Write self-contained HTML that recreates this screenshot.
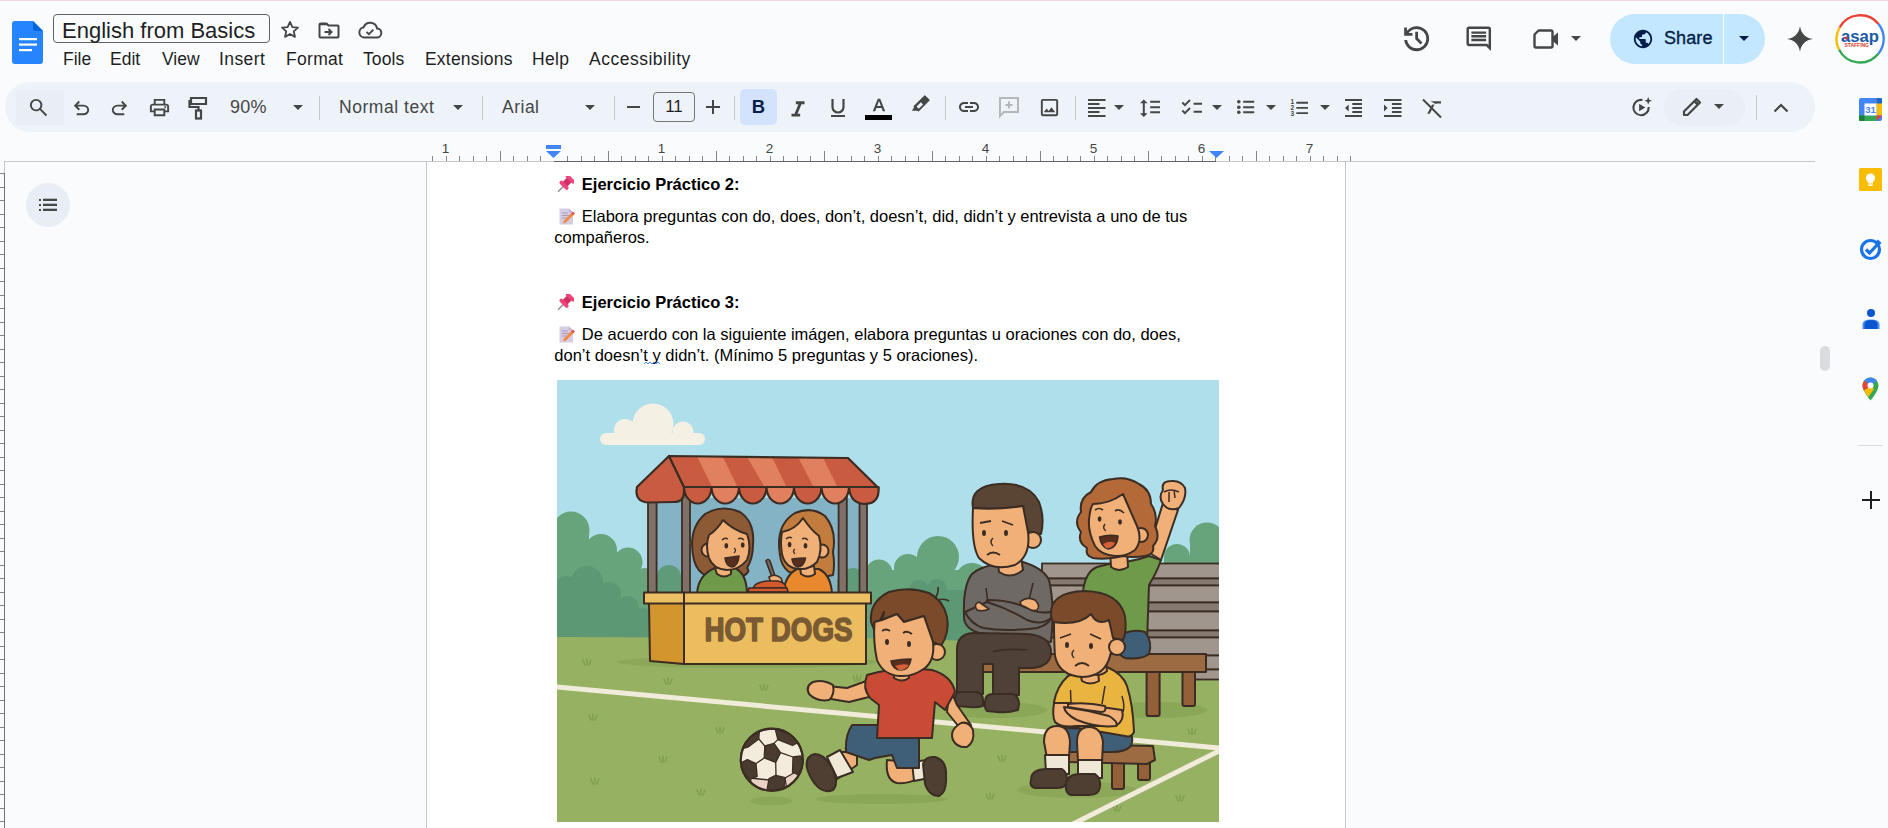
<!DOCTYPE html>
<html><head><meta charset="utf-8">
<style>
*{margin:0;padding:0;box-sizing:border-box}
html,body{width:1888px;height:828px;overflow:hidden;background:#f9fbfd;font-family:"Liberation Sans",sans-serif;position:relative}
.a{position:absolute}
.menu{position:absolute;top:48.5px;font-size:17.5px;color:#1f1f1f;white-space:nowrap}
.ico{position:absolute}
.sep{position:absolute;width:1px;background:#c7c7c7;top:96px;height:24px}
.tt{position:absolute;font-size:17.5px;color:#444746;white-space:nowrap}
.dd{position:absolute;width:0;height:0;border-left:5px solid transparent;border-right:5px solid transparent;border-top:5px solid #444746}
.doc{position:absolute;font-size:16.5px;color:#000;white-space:nowrap}
</style></head><body>
<div class="a" style="left:0;top:0;width:1888px;height:1px;background:#f2d8dc"></div>

<!-- ruler & page -->
<div class="a" style="left:426px;top:161px;width:920px;height:667px;background:#fff;border-left:1px solid #c7c7c7;border-right:1px solid #c7c7c7;border-top:1px solid #c7c7c7"></div>
<div class="a" style="left:4px;top:161px;width:1811px;height:1px;background:#c7c7c7"></div>
<div class="a" style="left:432.3px;top:156px;width:1px;height:5px;background:#80868b"></div><div class="a" style="left:445.8px;top:156px;width:1px;height:5px;background:#80868b"></div><div class="a" style="left:459.3px;top:156px;width:1px;height:5px;background:#80868b"></div><div class="a" style="left:472.8px;top:156px;width:1px;height:5px;background:#80868b"></div><div class="a" style="left:486.3px;top:156px;width:1px;height:5px;background:#80868b"></div><div class="a" style="left:499.8px;top:151px;width:1px;height:10px;background:#80868b"></div><div class="a" style="left:513.3px;top:156px;width:1px;height:5px;background:#80868b"></div><div class="a" style="left:526.8px;top:156px;width:1px;height:5px;background:#80868b"></div><div class="a" style="left:540.3px;top:156px;width:1px;height:5px;background:#80868b"></div><div class="a" style="left:567.3px;top:156px;width:1px;height:5px;background:#80868b"></div><div class="a" style="left:580.8px;top:156px;width:1px;height:5px;background:#80868b"></div><div class="a" style="left:594.3px;top:156px;width:1px;height:5px;background:#80868b"></div><div class="a" style="left:607.8px;top:151px;width:1px;height:10px;background:#80868b"></div><div class="a" style="left:621.3px;top:156px;width:1px;height:5px;background:#80868b"></div><div class="a" style="left:634.8px;top:156px;width:1px;height:5px;background:#80868b"></div><div class="a" style="left:648.3px;top:156px;width:1px;height:5px;background:#80868b"></div><div class="a" style="left:661.8px;top:156px;width:1px;height:5px;background:#80868b"></div><div class="a" style="left:675.3px;top:156px;width:1px;height:5px;background:#80868b"></div><div class="a" style="left:688.8px;top:156px;width:1px;height:5px;background:#80868b"></div><div class="a" style="left:702.3px;top:156px;width:1px;height:5px;background:#80868b"></div><div class="a" style="left:715.8px;top:151px;width:1px;height:10px;background:#80868b"></div><div class="a" style="left:729.3px;top:156px;width:1px;height:5px;background:#80868b"></div><div class="a" style="left:742.8px;top:156px;width:1px;height:5px;background:#80868b"></div><div class="a" style="left:756.3px;top:156px;width:1px;height:5px;background:#80868b"></div><div class="a" style="left:769.8px;top:156px;width:1px;height:5px;background:#80868b"></div><div class="a" style="left:783.3px;top:156px;width:1px;height:5px;background:#80868b"></div><div class="a" style="left:796.8px;top:156px;width:1px;height:5px;background:#80868b"></div><div class="a" style="left:810.3px;top:156px;width:1px;height:5px;background:#80868b"></div><div class="a" style="left:823.8px;top:151px;width:1px;height:10px;background:#80868b"></div><div class="a" style="left:837.3px;top:156px;width:1px;height:5px;background:#80868b"></div><div class="a" style="left:850.8px;top:156px;width:1px;height:5px;background:#80868b"></div><div class="a" style="left:864.3px;top:156px;width:1px;height:5px;background:#80868b"></div><div class="a" style="left:877.8px;top:156px;width:1px;height:5px;background:#80868b"></div><div class="a" style="left:891.3px;top:156px;width:1px;height:5px;background:#80868b"></div><div class="a" style="left:904.8px;top:156px;width:1px;height:5px;background:#80868b"></div><div class="a" style="left:918.3px;top:156px;width:1px;height:5px;background:#80868b"></div><div class="a" style="left:931.8px;top:151px;width:1px;height:10px;background:#80868b"></div><div class="a" style="left:945.3px;top:156px;width:1px;height:5px;background:#80868b"></div><div class="a" style="left:958.8px;top:156px;width:1px;height:5px;background:#80868b"></div><div class="a" style="left:972.3px;top:156px;width:1px;height:5px;background:#80868b"></div><div class="a" style="left:985.8px;top:156px;width:1px;height:5px;background:#80868b"></div><div class="a" style="left:999.3px;top:156px;width:1px;height:5px;background:#80868b"></div><div class="a" style="left:1012.8px;top:156px;width:1px;height:5px;background:#80868b"></div><div class="a" style="left:1026.3px;top:156px;width:1px;height:5px;background:#80868b"></div><div class="a" style="left:1039.8px;top:151px;width:1px;height:10px;background:#80868b"></div><div class="a" style="left:1053.3px;top:156px;width:1px;height:5px;background:#80868b"></div><div class="a" style="left:1066.8px;top:156px;width:1px;height:5px;background:#80868b"></div><div class="a" style="left:1080.3px;top:156px;width:1px;height:5px;background:#80868b"></div><div class="a" style="left:1093.8px;top:156px;width:1px;height:5px;background:#80868b"></div><div class="a" style="left:1107.3px;top:156px;width:1px;height:5px;background:#80868b"></div><div class="a" style="left:1120.8px;top:156px;width:1px;height:5px;background:#80868b"></div><div class="a" style="left:1134.3px;top:156px;width:1px;height:5px;background:#80868b"></div><div class="a" style="left:1147.8px;top:151px;width:1px;height:10px;background:#80868b"></div><div class="a" style="left:1161.3px;top:156px;width:1px;height:5px;background:#80868b"></div><div class="a" style="left:1174.8px;top:156px;width:1px;height:5px;background:#80868b"></div><div class="a" style="left:1188.3px;top:156px;width:1px;height:5px;background:#80868b"></div><div class="a" style="left:1201.8px;top:156px;width:1px;height:5px;background:#80868b"></div><div class="a" style="left:1215.3px;top:156px;width:1px;height:5px;background:#80868b"></div><div class="a" style="left:1228.8px;top:156px;width:1px;height:5px;background:#80868b"></div><div class="a" style="left:1242.3px;top:156px;width:1px;height:5px;background:#80868b"></div><div class="a" style="left:1255.8px;top:151px;width:1px;height:10px;background:#80868b"></div><div class="a" style="left:1269.3px;top:156px;width:1px;height:5px;background:#80868b"></div><div class="a" style="left:1282.8px;top:156px;width:1px;height:5px;background:#80868b"></div><div class="a" style="left:1296.3px;top:156px;width:1px;height:5px;background:#80868b"></div><div class="a" style="left:1309.8px;top:156px;width:1px;height:5px;background:#80868b"></div><div class="a" style="left:1323.3px;top:156px;width:1px;height:5px;background:#80868b"></div><div class="a" style="left:1336.8px;top:156px;width:1px;height:5px;background:#80868b"></div><div class="a" style="left:1350.3px;top:156px;width:1px;height:5px;background:#80868b"></div>
<div class="a" style="left:554px;top:160.5px;width:662px;height:1.5px;background:#5f6368"></div>
<div class="a" style="left:435.5px;top:141px;width:20px;text-align:center;font-size:13.5px;color:#444746">1</div><div class="a" style="left:651.5px;top:141px;width:20px;text-align:center;font-size:13.5px;color:#444746">1</div><div class="a" style="left:759.5px;top:141px;width:20px;text-align:center;font-size:13.5px;color:#444746">2</div><div class="a" style="left:867.5px;top:141px;width:20px;text-align:center;font-size:13.5px;color:#444746">3</div><div class="a" style="left:975.5px;top:141px;width:20px;text-align:center;font-size:13.5px;color:#444746">4</div><div class="a" style="left:1083.5px;top:141px;width:20px;text-align:center;font-size:13.5px;color:#444746">5</div><div class="a" style="left:1191.5px;top:141px;width:20px;text-align:center;font-size:13.5px;color:#444746">6</div><div class="a" style="left:1299.5px;top:141px;width:20px;text-align:center;font-size:13.5px;color:#444746">7</div>
<div class="a" style="left:546px;top:145px;width:15px;height:4px;background:#4285f4"></div>
<svg class="ico" style="left:546px;top:151px" width="15" height="7" viewBox="0 0 15 7"><path d="M0 0h15L7.5 7z" fill="#4285f4"/></svg>
<svg class="ico" style="left:1208.5px;top:151px" width="15" height="7" viewBox="0 0 15 7"><path d="M0 0h15L7.5 7z" fill="#4285f4"/></svg>
<div class="a" style="left:4px;top:161px;width:1px;height:12px;background:#c7c7c7"></div>
<div class="a" style="left:4px;top:173px;width:1px;height:655px;background:#70757a"></div>
<div class="a" style="left:0;top:173.2px;width:4px;height:1px;background:#80868b"></div><div class="a" style="left:0;top:186.7px;width:4px;height:1px;background:#80868b"></div><div class="a" style="left:0;top:200.2px;width:4px;height:1px;background:#80868b"></div><div class="a" style="left:0;top:213.7px;width:4px;height:1px;background:#80868b"></div><div class="a" style="left:0;top:227.2px;width:4px;height:1px;background:#80868b"></div><div class="a" style="left:0;top:240.7px;width:4px;height:1px;background:#80868b"></div><div class="a" style="left:0;top:254.2px;width:4px;height:1px;background:#80868b"></div><div class="a" style="left:0;top:267.7px;width:4px;height:1px;background:#80868b"></div><div class="a" style="left:0;top:281.2px;width:4px;height:1px;background:#80868b"></div><div class="a" style="left:0;top:294.7px;width:4px;height:1px;background:#80868b"></div><div class="a" style="left:0;top:308.2px;width:4px;height:1px;background:#80868b"></div><div class="a" style="left:0;top:321.7px;width:4px;height:1px;background:#80868b"></div><div class="a" style="left:0;top:335.2px;width:4px;height:1px;background:#80868b"></div><div class="a" style="left:0;top:348.7px;width:4px;height:1px;background:#80868b"></div><div class="a" style="left:0;top:362.2px;width:4px;height:1px;background:#80868b"></div><div class="a" style="left:0;top:375.7px;width:4px;height:1px;background:#80868b"></div><div class="a" style="left:0;top:389.2px;width:4px;height:1px;background:#80868b"></div><div class="a" style="left:0;top:402.7px;width:4px;height:1px;background:#80868b"></div><div class="a" style="left:0;top:416.2px;width:4px;height:1px;background:#80868b"></div><div class="a" style="left:0;top:429.7px;width:4px;height:1px;background:#80868b"></div><div class="a" style="left:0;top:443.2px;width:4px;height:1px;background:#80868b"></div><div class="a" style="left:0;top:456.7px;width:4px;height:1px;background:#80868b"></div><div class="a" style="left:0;top:470.2px;width:4px;height:1px;background:#80868b"></div><div class="a" style="left:0;top:483.7px;width:4px;height:1px;background:#80868b"></div><div class="a" style="left:0;top:497.2px;width:4px;height:1px;background:#80868b"></div><div class="a" style="left:0;top:510.7px;width:4px;height:1px;background:#80868b"></div><div class="a" style="left:0;top:524.2px;width:4px;height:1px;background:#80868b"></div><div class="a" style="left:0;top:537.7px;width:4px;height:1px;background:#80868b"></div><div class="a" style="left:0;top:551.2px;width:4px;height:1px;background:#80868b"></div><div class="a" style="left:0;top:564.7px;width:4px;height:1px;background:#80868b"></div><div class="a" style="left:0;top:578.2px;width:4px;height:1px;background:#80868b"></div><div class="a" style="left:0;top:591.7px;width:4px;height:1px;background:#80868b"></div><div class="a" style="left:0;top:605.2px;width:4px;height:1px;background:#80868b"></div><div class="a" style="left:0;top:618.7px;width:4px;height:1px;background:#80868b"></div><div class="a" style="left:0;top:632.2px;width:4px;height:1px;background:#80868b"></div><div class="a" style="left:0;top:645.7px;width:4px;height:1px;background:#80868b"></div><div class="a" style="left:0;top:659.2px;width:4px;height:1px;background:#80868b"></div><div class="a" style="left:0;top:672.7px;width:4px;height:1px;background:#80868b"></div><div class="a" style="left:0;top:686.2px;width:4px;height:1px;background:#80868b"></div><div class="a" style="left:0;top:699.7px;width:4px;height:1px;background:#80868b"></div><div class="a" style="left:0;top:713.2px;width:4px;height:1px;background:#80868b"></div><div class="a" style="left:0;top:726.7px;width:4px;height:1px;background:#80868b"></div><div class="a" style="left:0;top:740.2px;width:4px;height:1px;background:#80868b"></div><div class="a" style="left:0;top:753.7px;width:4px;height:1px;background:#80868b"></div><div class="a" style="left:0;top:767.2px;width:4px;height:1px;background:#80868b"></div><div class="a" style="left:0;top:780.7px;width:4px;height:1px;background:#80868b"></div><div class="a" style="left:0;top:794.2px;width:4px;height:1px;background:#80868b"></div><div class="a" style="left:0;top:807.7px;width:4px;height:1px;background:#80868b"></div><div class="a" style="left:0;top:821.2px;width:4px;height:1px;background:#80868b"></div>
<div class="a" style="left:26px;top:183px;width:44px;height:44px;border-radius:22px;background:#e8edf6"></div>
<svg class="ico" style="left:38px;top:197px" width="20" height="16" viewBox="0 0 20 16"><rect x="1" y="2" width="2" height="2" fill="#444746"/><rect x="1" y="7" width="2" height="2" fill="#444746"/><rect x="1" y="12" width="2" height="2" fill="#444746"/><rect x="5" y="1.7" width="14" height="2.3" fill="#444746"/><rect x="5" y="6.7" width="14" height="2.3" fill="#444746"/><rect x="5" y="11.7" width="14" height="2.3" fill="#444746"/></svg>
<div class="a" style="left:1820px;top:346px;width:10px;height:25px;border-radius:5px;background:#dadce0"></div>
<!-- side panel -->
<svg class="ico" style="left:1859px;top:98px" width="23" height="23" viewBox="0 0 23 23"><rect x="0" y="0" width="23" height="23" rx="2" fill="#4285f4"/><rect x="17.5" y="0" width="5.5" height="17.5" fill="#fbbc04"/><rect x="0" y="17.5" width="17.5" height="5.5" fill="#34a853"/><path d="M17.5 17.5h5.5l-5.5 5.5z" fill="#ea4335"/><path d="M17.5 0h3.5q2.5 0 2.5 2.5V5.5h-6z" fill="#1967d2"/><path d="M0 17.5h5.5v5.5H2.5Q0 23 0 20.5z" fill="#188038"/><rect x="5.5" y="5.5" width="12" height="12" fill="#fff"/><text x="11.5" y="15.3" text-anchor="middle" font-family="Liberation Sans" font-size="9.5" font-weight="700" fill="#4285f4">31</text></svg>
<svg class="ico" style="left:1859px;top:168px" width="23" height="23" viewBox="0 0 23 23"><rect width="23" height="23" rx="1.5" fill="#fbbc04"/><circle cx="11.5" cy="10" r="4.6" fill="#fff"/><rect x="9" y="13" width="5" height="2.5" fill="#fff"/><rect x="9.3" y="16.3" width="4.4" height="1.6" fill="#fff"/></svg>
<svg class="ico" style="left:1859px;top:237px" width="24" height="24" viewBox="0 0 24 24"><circle cx="11.5" cy="12.5" r="9" fill="none" stroke="#1a73e8" stroke-width="3.2"/><path d="M7 12.5l3.5 3.5 8-8.5" fill="none" stroke="#1a73e8" stroke-width="3.2"/><path d="M19 2.5l3.5 3.5-3 3-3.5-3.5z" fill="#1a73e8"/></svg>
<svg class="ico" style="left:1860px;top:308px" width="22" height="22" viewBox="0 0 22 22"><circle cx="11" cy="5" r="4" fill="#0b57d0"/><path d="M2.5 21v-4.5Q2.5 11.5 11 11.5t8.5 5V21z" fill="#4c8df6"/><path d="M4.5 21v-4.5Q4.5 12 11 12t6.5 4.5V21z" fill="#0b57d0"/></svg>
<svg class="ico" style="left:1862px;top:377px" width="17" height="24" viewBox="0 0 17 24"><path d="M8.5 0.5A8 8 0 0 0 0.5 8.5c0 5.5 8 15 8 15s8-9.5 8-15A8 8 0 0 0 8.5 0.5z" fill="#34a853"/><path d="M8.5 0.5A8 8 0 0 0 2.3 3.4L8.5 9.5l6.2-6.1A8 8 0 0 0 8.5 0.5z" fill="#4285f4"/><path d="M2.3 3.4A8 8 0 0 0 0.5 8.5c0 1.5.6 3.2 1.5 4.9L8.5 9.5z" fill="#ea4335"/><path d="M2 13.4c1.2 2.4 3 4.8 4.3 6.5L12 12 8.5 9.5z" fill="#fbbc04"/><circle cx="8.5" cy="8.5" r="3" fill="#fff"/></svg>
<div class="a" style="left:1858px;top:445px;width:25px;height:1px;background:#dadce0"></div>
<div class="a" style="left:1862px;top:499px;width:18px;height:2px;background:#1f1f1f"></div>
<div class="a" style="left:1870px;top:491px;width:2px;height:18px;background:#1f1f1f"></div>
<!-- doc text -->
<svg class="ico" style="left:557px;top:176px" width="17" height="16" viewBox="0 0 17 16"><path d="M1.5 15.2l6-6" stroke="#8a8f99" stroke-width="1.4" stroke-linecap="round"/><g transform="rotate(45 10 6.3)"><rect x="6.7" y="1.5" width="6.6" height="9" fill="#cf2f62"/><rect x="4.3" y="-0.3" width="11.4" height="3.8" rx="1.9" fill="#f0447c"/><rect x="4.3" y="8.6" width="11.4" height="3.8" rx="1.9" fill="#f0447c"/></g></svg>
<div class="doc" style="left:581.8px;top:174.6px;font-weight:700">Ejercicio Práctico 2:</div>
<svg class="ico" style="left:559px;top:208px" width="16" height="17" viewBox="0 0 16 17"><path d="M0.5 0.5h9.5l4 4v12h-13.5z" fill="#d6cce3"/><path d="M10 0.5l4 4h-4z" fill="#bfb3d0"/><path d="M3 5h6M3 7.5h8M3 10h6" stroke="#a89bb8" stroke-width="1"/><path d="M4 15.5l1-3 8-8 2 2-8 8z" fill="#f28b3c"/><path d="M12 5.5l2-2 2 2-2 2z" fill="#e8554e"/></svg>
<div class="doc" style="left:581.8px;top:207px">Elabora preguntas con do, does, don’t, doesn’t, did, didn’t y entrevista a uno de tus</div>
<div class="doc" style="left:554.3px;top:228px">compañeros.</div>
<svg class="ico" style="left:557px;top:294px" width="17" height="16" viewBox="0 0 17 16"><path d="M1.5 15.2l6-6" stroke="#8a8f99" stroke-width="1.4" stroke-linecap="round"/><g transform="rotate(45 10 6.3)"><rect x="6.7" y="1.5" width="6.6" height="9" fill="#cf2f62"/><rect x="4.3" y="-0.3" width="11.4" height="3.8" rx="1.9" fill="#f0447c"/><rect x="4.3" y="8.6" width="11.4" height="3.8" rx="1.9" fill="#f0447c"/></g></svg>
<div class="doc" style="left:581.8px;top:293px;font-weight:700">Ejercicio Práctico 3:</div>
<svg class="ico" style="left:559px;top:326px" width="16" height="17" viewBox="0 0 16 17"><path d="M0.5 0.5h9.5l4 4v12h-13.5z" fill="#d6cce3"/><path d="M10 0.5l4 4h-4z" fill="#bfb3d0"/><path d="M3 5h6M3 7.5h8M3 10h6" stroke="#a89bb8" stroke-width="1"/><path d="M4 15.5l1-3 8-8 2 2-8 8z" fill="#f28b3c"/><path d="M12 5.5l2-2 2 2-2 2z" fill="#e8554e"/></svg>
<div class="doc" style="left:581.8px;top:325px">De acuerdo con la siguiente imágen, elabora preguntas u oraciones con do, does,</div>
<div class="doc" style="left:554.3px;top:345.5px">don’t doesn’t y didn’t. (Mínimo 5 preguntas y 5 oraciones).</div>
<svg class="ico" style="left:644px;top:361px" width="16" height="4" viewBox="0 0 16 4"><path d="M0 3l2-2 2 2 2-2 2 2 2-2 2 2 2-2 2 2" fill="none" stroke="#4285f4" stroke-width="1"/></svg>
<!-- IMAGE -->
<svg class="ico" id="img" style="left:557px;top:380px" width="662" height="442" viewBox="0 0 662 442">
<rect width="662" height="442" fill="#b0dfec"/>
<!-- cloud -->
<g fill="#f5f0e4">
<circle cx="96" cy="44" r="20.5"/><circle cx="68" cy="50" r="11"/><circle cx="126" cy="52" r="10.5"/>
<rect x="43" y="53" width="105" height="12" rx="6"/>
</g>
<!-- back trees -->
<g fill="#67a47b">
<circle cx="14" cy="150" r="18.5"/><circle cx="44" cy="170" r="16"/><circle cx="71" cy="182" r="14.5"/><circle cx="88" cy="200" r="12"/>
<rect x="0" y="150" width="32" height="110"/><rect x="30" y="170" width="30" height="90"/><rect x="58" y="182" width="24" height="80"/><rect x="80" y="200" width="20" height="62"/>
<circle cx="322" cy="193" r="13.5"/><circle cx="351" cy="188" r="14"/><circle cx="381" cy="177" r="21"/><circle cx="415" cy="200" r="17"/>
<rect x="300" y="190" width="130" height="72"/><rect x="308" y="193" width="110" height="70"/>
<circle cx="296" cy="205" r="14"/><circle cx="112" cy="197" r="13"/>
<circle cx="620" cy="177" r="13"/><circle cx="650" cy="160" r="17.5"/><rect x="607" y="177" width="55" height="20"/><rect x="633" y="160" width="29" height="20"/>
</g>
<g fill="#5b9873">
<circle cx="9" cy="208" r="12"/><circle cx="30" cy="202" r="16"/><circle cx="52" cy="214" r="12"/><circle cx="70" cy="228" r="12"/><circle cx="86" cy="238" r="10"/>
<rect x="0" y="208" width="40" height="52"/><rect x="40" y="214" width="22" height="46"/><rect x="58" y="228" width="22" height="32"/><rect x="76" y="238" width="20" height="22"/>
<circle cx="362" cy="210" r="10"/><circle cx="380" cy="209" r="10"/><circle cx="404" cy="222" r="12"/><rect x="352" y="210" width="70" height="52"/><rect x="340" y="225" width="82" height="37"/>
</g>
<!-- grass -->
<path d="M0 257L300 258L420 261L662 263V442H0z" fill="#97b162"/>
<g fill="#89a656" opacity="0.9">
<ellipse cx="190" cy="282" rx="130" ry="6"/>
<ellipse cx="325" cy="419" rx="66" ry="5"/>
<ellipse cx="214" cy="421" rx="21" ry="4.5"/>
<ellipse cx="440" cy="330" rx="50" ry="8"/>
<ellipse cx="600" cy="330" rx="50" ry="8"/>
<ellipse cx="520" cy="410" rx="60" ry="8"/>
</g>
<g stroke="#809f52" stroke-width="1.6" stroke-linecap="round" fill="none"><path d="M26 280L28 285M30 279L30 285M34 280L32 285"/><path d="M107 299L109 304M111 298L111 304M115 299L113 304"/><path d="M203 305L205 310M207 304L207 310M211 305L209 310"/><path d="M32 335L34 340M36 334L36 340M40 335L38 340"/><path d="M159 348L161 353M163 347L163 353M167 348L165 353"/><path d="M102 377L104 382M106 376L106 382M110 377L108 382"/><path d="M34 399L36 404M38 398L38 404M42 399L40 404"/><path d="M140 410L142 415M144 409L144 415M148 410L146 415"/><path d="M631 349L633 354M635 348L635 354M639 349L637 354"/><path d="M441 376L443 381M445 375L445 381M449 376L447 381"/><path d="M619 416L621 421M623 415L623 421M627 416L625 421"/><path d="M429 414L431 419M433 413L433 419M437 414L435 419"/><path d="M296 296L298 301M300 295L300 301M304 296L302 301"/><path d="M556 426L558 431M560 425L560 431M564 426L562 431"/></g>
<!-- field lines -->
<path d="M0 307L662 368" stroke="#f1ebd9" stroke-width="5"/>
<path d="M664 370L516 444" stroke="#f1ebd9" stroke-width="5"/>
<!-- booth interior -->
<rect x="95" y="118" width="212" height="96" fill="#84b3c5"/>
<g fill="#5f9a79"><circle cx="112" cy="197" r="12"/><rect x="95" y="197" width="35" height="18"/><circle cx="296" cy="200" r="12"/><rect x="280" y="200" width="27" height="15"/></g>
<!-- posts -->
<g fill="#7f7169" stroke="#3b2d23" stroke-width="1.8">
<rect x="91" y="115" width="8.6" height="100"/><rect x="125" y="115" width="8" height="100"/>
<rect x="281.6" y="115" width="8.2" height="100"/><rect x="302.5" y="115" width="7.5" height="100"/>
</g>
<!-- girl 1 -->
<g stroke="#3b2d23" stroke-width="2" stroke-linejoin="round">
<path d="M137 180Q130 150 148 134Q165 124 183 132Q198 142 196 165Q196 178 190 188Q194 192 186 196L150 196Q140 192 137 180z" fill="#8d5a36"/>
<path d="M140 214Q141 195 158 188L178 188Q190 194 190 214z" fill="#6e9a4a"/>
<path d="M158 188L160 194Q167 199 174 194L174 186z" fill="#f0b078"/>
<circle cx="151" cy="170" r="6.5" fill="#f0b078"/>
<path d="M152 155Q160 150 166 140Q176 150 190 154Q195 168 190 180Q182 190 170 190Q156 189 152 178Q148 166 152 155z" fill="#f0b078"/>
<path d="M168 178Q176 177 182 176Q181 186 175 187Q169 186 168 178z" fill="#5a2e1e" stroke-width="1.6"/>
<path d="M165 160Q168 157 171 159M181 159Q184 157 187 160" fill="none" stroke-width="1.4"/>
<path d="M177 168Q180 170 177 173" fill="none" stroke-width="1.3"/>
</g>
<g fill="#3b2d23"><ellipse cx="169.3" cy="165.7" rx="1.9" ry="2.7"/><ellipse cx="185.7" cy="165" rx="1.9" ry="2.7"/></g>
<!-- girl 2 -->
<g stroke="#3b2d23" stroke-width="2" stroke-linejoin="round">
<path d="M223 175Q218 145 238 133Q255 126 268 136Q280 150 276 172Q278 185 276 195L262 198L232 192Q224 186 223 175z" fill="#c27c3d"/>
<path d="M226 214Q228 195 240 189L262 189Q274 195 275 214z" fill="#e8892e"/>
<path d="M243 188L244 194Q251 199 258 194L257 186z" fill="#f0b078"/>
<circle cx="265" cy="171" r="6.5" fill="#f0b078"/>
<path d="M225 152Q238 150 246 138Q254 150 262 156Q266 170 260 182Q252 190 242 189Q228 188 225 174Q223 162 225 152z" fill="#f0b078"/>
<path d="M235 179Q242 178 248.5 178Q247 186 241 187Q236 186 235 179z" fill="#5a2e1e" stroke-width="1.6"/>
<path d="M229 159Q232 156 235 158M245 159Q248 157 251 160" fill="none" stroke-width="1.4"/>
<path d="M238 169Q235 171 238 174" fill="none" stroke-width="1.3"/>
</g>
<g fill="#3b2d23"><ellipse cx="232.6" cy="164.5" rx="1.9" ry="2.7"/><ellipse cx="248.5" cy="165.7" rx="1.9" ry="2.7"/></g>
<!-- dish -->
<g stroke="#3b2d23" stroke-width="1.6" stroke-linejoin="round">
<path d="M209 181Q211 178 213 181L219 199L216 200z" fill="#7a6a60"/>
<path d="M212 197Q218 193 224 198L226 204L214 204z" fill="#f0b078"/>
<path d="M196 208Q198 202 211 201L221 201Q229 203 229 208z" fill="#d45a2e"/>
<path d="M191 212L231 212L230 208L192 208z" fill="#d45a2e"/>
</g>
<!-- counter -->
<g stroke="#3b2d23" stroke-width="2" stroke-linejoin="round">
<path d="M92 223L127 223L127 284L93 281z" fill="#d3962f"/>
<rect x="127" y="223" width="182" height="61" fill="#ebbd5f"/>
<rect x="87" y="212.5" width="227" height="11" fill="#ecc062"/>
<path d="M127 212.5V223.5" />
</g>
<text x="147.5" y="260.5" font-family="Liberation Sans" font-weight="700" font-size="34" fill="#7a5a32" stroke="#7a5a32" stroke-width="1.6" stroke-linejoin="round" textLength="148" lengthAdjust="spacingAndGlyphs">HOT DOGS</text>
<!-- awning -->
<g stroke="#3b2d23" stroke-width="2.2" stroke-linejoin="round">
<path d="M112 76L80 107Q77 122 92 122.5L117 122Q127 122 127 112L127 107z" fill="#c95b40"/>
</g>
<clipPath id="aw"><path d="M112 76L291 78L321.5 108L127 107z"/></clipPath>
<g clip-path="url(#aw)">
<rect x="80" y="70" width="250" height="45" fill="#c95b40"/>
<g fill="#e0805f"><path d="M139.5 75L165 75L181 108L155.5 108z"/><path d="M189 75L214 75L230 108L208 108z"/><path d="M240 75L264.5 75L281 108L257 108z"/></g>
</g>
<g stroke="#3b2d23" stroke-width="2.2" fill="none" stroke-linejoin="round"><path d="M112 76L291 78L321.5 108L127 107zM112 76L127 107"/></g>
<g stroke="#3b2d23" stroke-width="2.2" stroke-linejoin="round">
<path d="M127 107H154.5A13.75 16.5 0 0 1 127 107" fill="#c95b40"/>
<path d="M154.5 107H182A13.75 16.5 0 0 1 154.5 107" fill="#e0805f"/>
<path d="M182 107H209.5A13.75 16.5 0 0 1 182 107" fill="#c95b40"/>
<path d="M209.5 107H237A13.75 16.5 0 0 1 209.5 107" fill="#e0805f"/>
<path d="M237 107H264.5A13.75 16.5 0 0 1 237 107" fill="#c95b40"/>
<path d="M264.5 107H292A13.75 16.5 0 0 1 264.5 107" fill="#e0805f"/>
<path d="M292 107H321.5Q323 124 307 124Q293 123 292 107z" fill="#c95b40"/>
</g>
<!-- bench back -->
<g stroke="#3b2d23" stroke-width="1.8">
<rect x="485" y="183.5" width="180" height="15" fill="#a0968d"/>
<rect x="485" y="198.5" width="180" height="7" fill="#857a71"/>
<rect x="485" y="205.5" width="180" height="17" fill="#a0968d"/>
<rect x="485" y="222.5" width="180" height="9" fill="#857a71"/>
<rect x="485" y="231.5" width="180" height="19" fill="#a0968d"/>
<rect x="485" y="250.5" width="180" height="7" fill="#857a71"/>
<rect x="485" y="257.5" width="180" height="18" fill="#a0968d"/>
<rect x="485" y="275.5" width="180" height="14" fill="#a0968d"/>
<rect x="636" y="289.5" width="30" height="10" fill="#a0968d"/>
</g>
<!-- bench seat -->
<g stroke="#3b2d23" stroke-width="2" stroke-linejoin="round">
<rect x="589.6" y="288" width="13" height="48" rx="2" fill="#93603a"/>
<rect x="625.5" y="288" width="12.5" height="38" rx="2" fill="#93603a"/>
<path d="M425 274H649V292H425z" fill="#9c6b42"/>
</g>
<!-- woman -->
<g stroke="#3b2d23" stroke-width="2" stroke-linejoin="round">
<path d="M526 262L526 212Q528 192 540 187L556 183Q575 182 592 176L604 180Q600 192 592 205L590 262z" fill="#6e9a4a"/>
<path d="M591 172L606 123L621 130L604 180z" fill="#f0b078"/>
<path d="M606 110Q604 101 614 101Q624 100 628 108Q630 118 622 128Q612 132 606 124Q601 117 606 110z" fill="#f0b078"/>
<path d="M607 112Q614 108 622 112M612 112L612 122M617 110L618 118" fill="none" stroke-width="1.5"/>
<path d="M553 170L554 187Q562 193 571 187L570 170z" fill="#f0b078"/>
<path d="M560 258Q572 248 588 252Q596 262 592 274Q584 280 568 278Q556 272 560 258z" fill="#3f5e78"/>
<path d="M536 178Q528 176 530 168Q520 162 524 152Q516 142 524 132Q522 118 534 112Q540 100 556 99Q570 96 582 104Q594 110 594 124Q601 134 598 146Q604 158 596 166Q598 174 588 176Q576 178 566 176Q548 180 536 178z" fill="#b36a38"/>
<circle cx="584" cy="155" r="7" fill="#f0b078"/>
<path d="M532 140Q533 128 536 124Q552 124 566 114Q572 128 580 146Q586 160 578 170Q568 177 558 176Q544 175 538 166Q531 152 532 140z" fill="#f0b078"/>
<path d="M542.6 157Q552 154 561 156Q560 168 551 169Q544 167 542.6 157z" fill="#5a2e1e" stroke-width="1.6"/>
<path d="M546 164Q553 160 558 163Q555 169 549 168z" fill="#d4603a" stroke="none"/>
<path d="M538 130Q542 127 546 130M558 131Q562 128 567 133" fill="none" stroke-width="1.6"/>
<path d="M548 144Q545 148 549 151" fill="none" stroke-width="1.4"/>
</g>
<g fill="#3b2d23"><ellipse cx="542.6" cy="139" rx="1.9" ry="2.7"/><ellipse cx="563" cy="142" rx="1.9" ry="2.7"/></g>
<!-- man -->
<g stroke="#3b2d23" stroke-width="2" stroke-linejoin="round">
<path d="M422 253Q406 248 407 235Q406 205 415 194Q424 186 442 184L466 182Q486 188 492 200Q498 225 494 262z" fill="#6f6965"/>
<path d="M440 176L442 192Q454 200 466 190L464 176z" fill="#f0b078"/>
<path d="M429 208L431 223M476 203L472 220" fill="none" stroke-width="1.6"/>
<path d="M463 222Q470 216 478 220Q484 226 480 230Q472 232 466 229z" fill="#f0b078" stroke-width="1.6"/>
<path d="M408 232Q414 244 426 248Q450 252 480 248Q494 244 494 236Q470 238 452 226Q440 222 430 222z" fill="#6f6965"/>
<path d="M422 222Q416 224 420 230Q426 232 432 229z" fill="#f0b078" stroke-width="1.6"/>
<path d="M430 222Q450 228 470 240Q484 246 494 238L494 232Q480 234 470 228Q454 220 430 220z" fill="#6f6965"/>
<path d="M400 314L400 270Q400 254 416 253L470 254Q494 256 494 272Q494 286 476 288L462 288L462 315L436 315L436 284L426 284L426 314z" fill="#4f4038"/>
<path d="M436 272Q446 268 470 270" fill="none" stroke-width="1.6"/>
<path d="M398 318Q398 312 404 312L420 312Q426 314 426 320L426 326Q420 328 412 327L400 326Q397 324 398 318z" fill="#4f4038"/>
<path d="M428 322Q428 314 436 314L456 314Q462 316 462 324L461 330Q452 333 440 332L430 331Q427 328 428 322z" fill="#4f4038"/>
<path d="M416 128Q412 106 442 104Q472 102 482 122Q488 138 484 154L471 152L466 126Q440 130 416 128z" fill="#5a4535"/>
<circle cx="476" cy="160" r="8" fill="#f0b078"/>
<path d="M416 128Q440 130 466 126L471 152Q474 176 458 185Q436 192 422 178Q414 166 416 128z" fill="#f0b078"/>
<path d="M430 175Q436 170 443 175" fill="none" stroke-width="1.8"/>
<path d="M423 143L434 141M445 141L456 145" fill="none" stroke-width="1.8"/>
<path d="M436 158Q432 162 436 166" fill="none" stroke-width="1.4"/>
</g>
<g fill="#3b2d23"><ellipse cx="427" cy="153" rx="2" ry="3"/><ellipse cx="449" cy="153" rx="2" ry="3"/></g>
<!-- running boy -->
<g stroke="#3b2d23" stroke-width="2" stroke-linejoin="round">
<path d="M300 372L283 372L262 392L276 402L300 385z" fill="#f0b078"/>
<path d="M270 377L283 370L296 392L280 398z" fill="#efe8d6"/>
<path d="M250 388Q248 376 258 374Q268 374 276 390Q282 404 276 410Q266 414 258 404Q252 396 250 388z" fill="#4f3f33"/>
<path d="M330 380Q328 400 340 403Q352 404 362 398L362 383z" fill="#f0b078"/>
<path d="M355 382L370 380L372 398L357 401z" fill="#efe8d6"/>
<path d="M366 384Q368 376 378 377Q390 380 389 396Q390 412 382 416Q372 416 368 404z" fill="#4f3f33"/>
<path d="M295 345L362 345L362 388L340 388L335 375L318 378L312 380L289 372Q288 355 295 345z" fill="#3f5e78"/>
<path d="M393 308L400 325L414 345L406 352L390 332z" fill="#f0b078"/>
<path d="M404 343Q412 341 416 350Q418 362 410 367Q400 368 396 360Q392 350 404 343z" fill="#f0b078"/>
<path d="M312 300L290 308L270 306L268 318L292 322L316 316z" fill="#f0b078"/>
<path d="M256 302Q266 299 276 305Q278 315 272 320Q260 322 252 314Q248 306 256 302z" fill="#f0b078"/>
<path d="M310 295Q340 286 375 290Q395 296 398 312L388 330L378 322L375 358L320 358L322 325L313 318Q305 308 310 295z" fill="#c94a35"/>
<path d="M337 291L337 298Q345 303 352 298L352 291z" fill="#f0b078"/>
<path d="M314 242Q312 222 332 212Q352 206 372 213Q386 220 390 237Q393 252 384 266L376 262L367 236L347 242L340 234L325 240L327 232L318 252z" fill="#7a4a2a"/>
<path d="M378 219Q382 212 381 207M381 220Q388 218 392 221" fill="none" stroke-width="1.6"/>
<circle cx="380" cy="272" r="8" fill="#f0b078"/>
<path d="M317.5 242L325 240L327 232L325 240L340 234L347 242L367 236L376 262Q378 280 368 288Q356 297 343 296Q326 295 320 280Q316 262 317.5 242z" fill="#f0b078"/>
<path d="M334 281Q344 279 354 279Q352 290 344 290Q336 290 334 281z" fill="#5a2e1e" stroke-width="1.6"/>
<path d="M338 286Q346 283 352 285Q348 291 342 290z" fill="#d4603a" stroke="none"/>
<path d="M325 251Q329 248 333 251M346 253Q350 250 355 254" fill="none" stroke-width="1.8"/>
</g>
<g fill="#3b2d23"><ellipse cx="330" cy="262" rx="2" ry="3"/><ellipse cx="352" cy="264" rx="2" ry="3"/></g>
<!-- ball -->
<circle cx="214.8" cy="379.7" r="31" fill="#f3ebdc" stroke="#3b2d23" stroke-width="2"/>
<clipPath id="bc"><circle cx="214.8" cy="379.7" r="30.5"/></clipPath>
<g clip-path="url(#bc)" stroke="#3b2d23" stroke-width="1.3" stroke-linejoin="round">
<path d="M193 398L212 400L212 412L196 410z" fill="#e8d3c6"/>
<path d="M228 398L242 390L246 400L230 410z" fill="#e8d3c6"/>
<g fill="#4a3b30">
<path d="M207.8 366L217 363.4L223.5 372.6L218.7 382.4L207.2 378z"/>
<path d="M221.9 350.9L233.9 354.1L242.6 361.7L235.5 365.5L220.8 359.6L218 348z"/>
<path d="M202.3 352L201.8 359L190.9 367.2L184 369L186 356L196 348z"/>
<path d="M185 382.4L190.4 379.7L199 383.5L200.2 396.5L193.6 399.2L183 392z"/>
<path d="M212 398.7L218.7 395.4L228.4 397.6L227.3 406.3L219.7 412L210 410z"/>
<path d="M236 377L243.7 375.9L247 385.7L240.4 394.3L235.5 392.2z"/>
</g>
<path d="M207.8 366L201.8 359M217 363.4L220.8 359.6M223.5 372.6L236 377M218.7 382.4L219 395.4M207.2 378L199 383.5M233.9 354.1L232 352" fill="none"/>
</g>
<circle cx="214.8" cy="379.7" r="31" fill="none" stroke="#3b2d23" stroke-width="2.2"/>
<!-- sad boy -->
<g stroke="#3b2d23" stroke-width="2" stroke-linejoin="round">
<rect x="555" y="375" width="12" height="34" rx="2" fill="#93603a"/>
<rect x="581" y="375" width="12" height="25" rx="2" fill="#93603a"/>
<path d="M509 364L596 366L598 380L590 384L511 382z" fill="#9c6b42"/>
<path d="M507 348L570 350Q578 356 574 366Q568 372 555 372L512 372Q504 366 507 348z" fill="#3f5e78"/>
<path d="M511 296Q530 288 550 287Q566 294 570 306Q576 325 577 352Q574 358 568 356L510 346Q500 340 497 322Q500 306 511 296z" fill="#e9b43f"/>
<path d="M523 293L525 301Q533 306 542 301L541 292z" fill="#f0b078"/>
<path d="M497 323Q495 336 498 342Q504 348 520 346L559 346Q568 340 565 330Q540 326 512 323z" fill="#f0b078"/>
<path d="M507 327Q530 330 552 336Q562 342 559 346Q540 348 520 340Q508 334 507 327z" fill="#f0b078"/>
<path d="M511 324Q530 322 548 326Q550 332 544 332Q528 330 511 327z" fill="#f0b078"/>
<path d="M513.5 310L514 323M548 306L545 324M565 316Q568 326 566 332" fill="none" stroke-width="1.5"/>
<path d="M487 362Q487 346 500 346Q512 346 513 362L512 378L490 378z" fill="#f0b078"/>
<path d="M520 362Q520 347 532 347Q544 347 546 362L545 382L521 382z" fill="#f0b078"/>
<path d="M488 375L512 375L512 394L489 394z" fill="#efe8d6"/>
<path d="M521 380L545 380L545 398L521 398z" fill="#efe8d6"/>
<path d="M474 400Q474 389 490 389L505 389Q510 392 510 400Q510 408 500 408L478 408Q472 406 474 400z" fill="#4f3f33"/>
<path d="M509 405Q509 394 524 394L538 394Q544 398 543 407Q542 415 532 415L514 415Q508 413 509 405z" fill="#4f3f33"/>
<path d="M532 283L533 293Q542 298 550 291L549 283z" fill="#f0b078"/>
<path d="M497 240Q497 262 498 276Q502 296 526 297Q548 296 553 276L558 256L550 236Q540 240 534 230Q520 244 497 238z" fill="#f0b078"/>
<path d="M494 236Q492 212 528 211Q562 212 568 236Q570 252 566 260L556 258L552 240Q540 246 534 234Q522 246 496 242z" fill="#7a4a2a"/>
<circle cx="560" cy="267" r="8" fill="#f0b078"/>
<path d="M518 286Q525 280 532 286" fill="none" stroke-width="1.8"/>
<path d="M503 258L514 254M533 254L544 259" fill="none" stroke-width="1.8"/>
<path d="M517 270Q513 274 517 278" fill="none" stroke-width="1.4"/>
</g>
<g fill="#3b2d23"><ellipse cx="510" cy="265" rx="2" ry="3"/><ellipse cx="534" cy="266" rx="2" ry="3"/></g>

</svg>
<!-- header -->
<svg class="ico" style="left:12px;top:21px" width="32" height="43" viewBox="0 0 32 43">
<path d="M3 0H21L31 10V40Q31 43 28 43H3Q0 43 0 40V3Q0 0 3 0Z" fill="#2684fc"/>
<path d="M21 0L31 10H24Q21 10 21 7Z" fill="#0066da"/>
<rect x="7" y="17" width="18" height="2.2" fill="#fff"/><rect x="7" y="22.5" width="18" height="2.2" fill="#fff"/><rect x="7" y="28" width="13" height="2.2" fill="#fff"/>
</svg>
<div class="a" style="left:53px;top:14px;width:217px;height:29px;border:1px solid #5f6368;border-radius:4px"></div>
<div class="a" style="left:62px;top:18px;font-size:22px;color:#1f1f1f;white-space:nowrap">English from Basics</div>

<!-- header icons -->
<svg class="ico" style="left:279px;top:19px" width="22" height="22" viewBox="0 0 24 24"><path d="M12 3.2l2.6 5.6 6.1.6-4.6 4.1 1.3 6-5.4-3.1-5.4 3.1 1.3-6-4.6-4.1 6.1-.6z" fill="none" stroke="#444746" stroke-width="2" stroke-linejoin="round"/></svg>
<svg class="ico" style="left:318px;top:21px" width="22" height="18" viewBox="0 0 22 18"><path d="M3 2.5h5.5l2 2H19.5q1 0 1 1V15.5q0 1-1 1H2.5q-1 0-1-1V3.5q0-1 1.5-1z" fill="none" stroke="#444746" stroke-width="2" stroke-linejoin="round"/><path d="M2 2h6.8l2 2.2H2z" fill="#444746"/><path d="M6.5 11h6.5M10.5 8l3 3-3 3" fill="none" stroke="#444746" stroke-width="2"/></svg>
<svg class="ico" style="left:357px;top:19px" width="26" height="22" viewBox="0 0 26 22"><path d="M7 18.5h12.5a4.5 4.5 0 0 0 .6-9A7 7 0 0 0 6.7 8.2 5.2 5.2 0 0 0 7 18.5z" fill="none" stroke="#444746" stroke-width="2"/><path d="M9.5 12.8l2.4 2.4 4.5-4.5" fill="none" stroke="#444746" stroke-width="1.9"/></svg>
<div class="menu" style="left:63px">File</div>
<div class="menu" style="left:110px">Edit</div>
<div class="menu" style="left:162px">View</div>
<div class="menu" style="left:219px;letter-spacing:0.4px">Insert</div>
<div class="menu" style="left:286px;letter-spacing:0.3px">Format</div>
<div class="menu" style="left:363px;letter-spacing:0.1px">Tools</div>
<div class="menu" style="left:425px;letter-spacing:0.2px">Extensions</div>
<div class="menu" style="left:532px;letter-spacing:0.3px">Help</div>
<div class="menu" style="left:589px;letter-spacing:0.5px">Accessibility</div>
<!-- right header -->
<svg class="ico" style="left:1399.8px;top:21.8px" width="33.3" height="33.3" viewBox="0 -960 960 960"><path d="M480-120q-138 0-240.5-91.5T122-440h82q14 104 92.5 172T480-200q117 0 198.5-81.5T760-480q0-117-81.5-198.5T480-760q-69 0-129 32t-101 88h110v80H120v-240h80v94q51-64 124.5-99T480-840q75 0 140.5 28.5t114 77q48.5 48.5 77 114T840-480q0 75-28.5 140.5t-77 114q-48.5 48.5-114 77T480-120Zm112-192L440-464v-216h80v184l128 128-56 56Z" fill="#444746"/></svg>
<svg class="ico" style="left:1463.5px;top:24px" width="29.5" height="29.5" viewBox="0 0 24 24"><path d="M21.99 4c0-1.1-.89-2-1.99-2H4c-1.1 0-2 .9-2 2v12c0 1.1.9 2 2 2h14l4 4-.01-18zM20 4v13.17L18.83 16H4V4h16zM6 12h12v2H6zm0-3h12v2H6zm0-3h12v2H6z" fill="#444746"/></svg>
<svg class="ico" style="left:1532px;top:27px" width="28" height="24" viewBox="0 0 28 24"><path d="M6.5 3.5H19a1.5 1.5 0 0 1 1.5 1.5v14a1.5 1.5 0 0 1-1.5 1.5H4A1.5 1.5 0 0 1 2.5 19V7.5z" fill="none" stroke="#444746" stroke-width="2.4" stroke-linejoin="round"/><path d="M20.5 10L26 5.5v13L20.5 14z" fill="#444746"/></svg>
<div class="dd" style="left:1571px;top:36px"></div>
<div class="a" style="left:1610px;top:14px;width:155px;height:50px;border-radius:25px;background:#c2e7ff"></div>
<div class="a" style="left:1723px;top:14px;width:1px;height:50px;background:#f9fbfd"></div>
<svg class="ico" style="left:1632px;top:28px" width="22" height="22" viewBox="0 0 24 24"><path d="M12 2C6.48 2 2 6.48 2 12s4.48 10 10 10 10-4.48 10-10S17.52 2 12 2zm-1 17.93c-3.95-.49-7-3.85-7-7.93 0-.62.08-1.21.21-1.79L9 15v1c0 1.1.9 2 2 2v1.93zm6.9-2.54c-.26-.81-1-1.39-1.9-1.39h-1v-3c0-.55-.45-1-1-1H8v-2h2c.55 0 1-.45 1-1V7h2c1.1 0 2-.9 2-2v-.41c2.93 1.19 5 4.06 5 7.41 0 2.08-.8 3.97-2.1 5.39z" fill="#041e49"/></svg>
<div class="a" style="left:1664px;top:28px;font-size:18px;color:#041e49;font-weight:400;white-space:nowrap;letter-spacing:0.1px;-webkit-text-stroke:0.35px #041e49">Share</div>
<div class="dd" style="left:1738.5px;top:36px;border-top-color:#041e49"></div>
<svg class="ico" style="left:1787px;top:26px" width="26" height="26" viewBox="0 0 24 24"><path d="M12 0C12.6 6.5 17.5 11.4 24 12 17.5 12.6 12.6 17.5 12 24 11.4 17.5 6.5 12.6 0 12 6.5 11.4 11.4 6.5 12 0z" fill="#444746"/></svg>
<svg class="ico" style="left:1835px;top:14px" width="50" height="50" viewBox="0 0 50 50">
<circle cx="25" cy="24.7" r="23.5" fill="#fff"/>
<path d="M4.6 13.5A23.5 23.5 0 0 1 43.5 10" fill="none" stroke="#ea4335" stroke-width="2.4"/>
<path d="M43.5 10A23.5 23.5 0 0 1 43.5 39.5" fill="none" stroke="#4285f4" stroke-width="2.4"/>
<path d="M43.5 39.5A23.5 23.5 0 0 1 4 35.5" fill="none" stroke="#34a853" stroke-width="2.4"/>
<path d="M4 35.5A23.5 23.5 0 0 1 4.6 13.5" fill="none" stroke="#fbbc04" stroke-width="2.4"/>
<text x="6" y="27.5" font-family="Liberation Sans" font-weight="700" font-size="16" fill="#1a5aa8" textLength="38" lengthAdjust="spacingAndGlyphs">asap</text>
<circle cx="11" cy="24" r="1.6" fill="#e03a2e"/>
<text x="9.5" y="33.2" font-family="Liberation Sans" font-weight="700" font-size="5" fill="#e03a2e" textLength="24.5" lengthAdjust="spacing">STAFFING</text>
</svg>

<!-- toolbar -->
<div class="a" style="left:5px;top:82px;width:1810px;height:50px;border-radius:25px;background:#eef2f9"></div>
<div class="a" style="left:16px;top:90px;width:48px;height:35px;background:#e9eef6"></div>
<svg class="ico" style="left:27px;top:96px" width="23" height="23" viewBox="0 -960 960 960"><path d="M784-120 532-372q-30 24-69 38t-83 14q-109 0-184.5-75.5T120-580q0-109 75.5-184.5T380-840q109 0 184.5 75.5T640-580q0 44-14 83t-38 69l252 252-56 56ZM380-400q75 0 127.5-52.5T560-580q0-75-52.5-127.5T380-760q-75 0-127.5 52.5T200-580q0 75 52.5 127.5T380-400Z" fill="#444746"/></svg>
<svg class="ico" style="left:70px;top:96.5px" width="23" height="23" viewBox="0 -960 960 960"><path d="M280-200v-80h284q63 0 109.5-40T720-420q0-60-46.5-100T564-560H312l104 104-56 56-200-200 200-200 56 56-104 104h252q97 0 166.5 63T800-420q0 94-69.5 157T564-200H280Z" fill="#444746"/></svg>
<svg class="ico" style="left:108px;top:96.5px" width="23" height="23" viewBox="0 -960 960 960"><path d="M396-200q-97 0-166.5-63T160-420q0-94 69.5-157T396-640h252L544-744l56-56 200 200-200 200-56-56 104-104H396q-63 0-109.5 40T240-420q0 60 46.5 100T396-280h284v80H396Z" fill="#444746"/></svg>
<svg class="ico" style="left:148px;top:96px" width="23" height="23" viewBox="0 -960 960 960"><path d="M640-640v-120H320v120h-80v-200h480v200h-80Zm-480 80h640-640Zm560 100q17 0 28.5-11.5T760-500q0-17-11.5-28.5T720-540q-17 0-28.5 11.5T680-500q0 17 11.5 28.5T720-460Zm-80 260v-160H320v160h320Zm80 80H240v-160H80v-240q0-51 35-85.5t85-34.5h560q51 0 85.5 34.5T880-520v240H720v160Zm80-240v-160q0-17-11.5-28.5T760-560H200q-17 0-28.5 11.5T160-520v160h80v-80h480v80h80Z" fill="#444746"/></svg>
<svg class="ico" style="left:188px;top:96px" width="22" height="24" viewBox="0 0 22 24"><path d="M3 2h15v6H3z" fill="none" stroke="#444746" stroke-width="2.2"/><path d="M3 5H1.5v6h9v3" fill="none" stroke="#444746" stroke-width="2.2"/><rect x="8" y="14.5" width="5" height="8" fill="none" stroke="#444746" stroke-width="2.2"/></svg>
<div class="tt" style="left:230px;top:97px;font-size:18px;letter-spacing:0.3px">90%</div>
<div class="dd" style="left:292.5px;top:105px"></div>
<div class="sep" style="left:319px"></div>
<div class="tt" style="left:339px;top:97px;font-size:17.5px;letter-spacing:0.55px">Normal text</div>
<div class="dd" style="left:453px;top:105px"></div>
<div class="sep" style="left:482px"></div>
<div class="tt" style="left:502px;top:97px;font-size:17.5px;letter-spacing:0.5px">Arial</div>
<div class="dd" style="left:585px;top:105px"></div>
<div class="sep" style="left:614px"></div>
<div class="a" style="left:627px;top:106px;width:13px;height:2px;background:#444746"></div>
<div class="a" style="left:653px;top:92px;width:42px;height:30px;border:1px solid #747775;border-radius:4px"></div>
<div class="tt" style="left:653px;top:97px;width:42px;text-align:center;font-size:17px;color:#1f1f1f">11</div>
<div class="a" style="left:706px;top:106px;width:14px;height:2px;background:#444746"></div>
<div class="a" style="left:712px;top:100px;width:2px;height:14px;background:#444746"></div>
<div class="sep" style="left:734px"></div>
<div class="a" style="left:740px;top:89px;width:37px;height:36px;border-radius:5px;background:#d3e3fd"></div>
<div class="a" style="left:740px;top:96px;width:37px;text-align:center;font-size:18.5px;font-weight:700;color:#041e49">B</div>
<svg class="ico" style="left:785px;top:96.5px" width="26" height="26" viewBox="0 0 24 24"><path d="M10 4v2.6h2.4l-3.6 8.8H6V18h8v-2.6h-2.4l3.6-8.8H18V4z" fill="#444746"/></svg>
<svg class="ico" style="left:827px;top:96px" width="22" height="24" viewBox="0 0 22 24"><path d="M5.5 3v8a5.5 5.5 0 0 0 11 0V3" fill="none" stroke="#444746" stroke-width="2.2"/><rect x="4" y="19" width="14" height="2" fill="#444746"/></svg>
<svg class="ico" style="left:865px;top:96px" width="28" height="24" viewBox="0 0 28 24"><path d="M7.8 15.3L12.8 2.7h2.4l5 12.6h-2.4l-1.2-3.2H11.4l-1.2 3.2zM12.1 10.1h3.8L14 4.9z" fill="#444746"/><rect x="0" y="19" width="27" height="5" fill="#000"/></svg>
<svg class="ico" style="left:908px;top:93px" width="24" height="20" viewBox="0 0 24 20"><path d="M6.2 13.5L16.8 2.9L21.1 7.2L10.5 17.8z" fill="#444746" stroke="#444746" stroke-width="1.2" stroke-linejoin="round"/><path d="M8.6 13.6L12.9 9.3L15 11.4L10.7 15.7z" fill="#eef2f9"/><path d="M3.9 17.8L6.6 13.4L10.5 17.8z" fill="#444746"/></svg>
<div class="sep" style="left:945px"></div>
<svg class="ico" style="left:957px;top:95px" width="24" height="24" viewBox="0 0 24 24"><path d="M3.9 12c0-1.71 1.39-3.1 3.1-3.1h4V7H7c-2.76 0-5 2.24-5 5s2.24 5 5 5h4v-1.9H7c-1.71 0-3.1-1.39-3.1-3.1zM8 13h8v-2H8v2zm9-6h-4v1.9h4c1.71 0 3.1 1.39 3.1 3.1s-1.39 3.1-3.1 3.1h-4V17h4c2.76 0 5-2.24 5-5s-2.24-5-5-5z" fill="#444746"/></svg>
<svg class="ico" style="left:997px;top:95px" width="24" height="24" viewBox="0 0 24 24"><path d="M3 3h18v14H7l-4 4z" fill="none" stroke="#b4b8bd" stroke-width="2"/><path d="M12 6.5v7M8.5 10h7" stroke="#b4b8bd" stroke-width="2"/></svg>
<svg class="ico" style="left:1038px;top:96px" width="23" height="23" viewBox="0 0 24 24"><path d="M19 5v14H5V5h14m0-2H5c-1.1 0-2 .9-2 2v14c0 1.1.9 2 2 2h14c1.1 0 2-.9 2-2V5c0-1.1-.9-2-2-2zm-4.86 8.86l-3 3.87L9 13.14 6 17h12l-3.86-5.14z" fill="#444746"/></svg>
<div class="sep" style="left:1075px"></div>
<svg class="ico" style="left:1088px;top:97px" width="18" height="22" viewBox="0 0 18 22"><path d="M0 3h17.5M0 7h11.5M0 11h17.5M0 15h11.5M0 19h17.5" stroke="#444746" stroke-width="1.9"/></svg>
<div class="dd" style="left:1114px;top:105px"></div>
<svg class="ico" style="left:1139px;top:97px" width="22" height="22" viewBox="0 0 22 22"><path d="M4.8 4v14.5" stroke="#444746" stroke-width="2"/><path d="M1 6.2L4.8 2.4L8.6 6.2zM1 16.3L4.8 20.1L8.6 16.3z" fill="#444746"/><path d="M11.2 4.7h9.8M11.2 10.2h9.8M11.2 15.3h9.8" stroke="#444746" stroke-width="1.9"/></svg>
<div class="sep" style="display:none"></div>
<svg class="ico" style="left:1181px;top:97px" width="22" height="22" viewBox="0 0 22 22"><path d="M1.3 5.5l2.6 2.6L9 3M1.3 13.5l2.6 2.6L9 11" fill="none" stroke="#444746" stroke-width="1.9"/><path d="M12.6 6.8h8.4M12.6 14.8h8.4" stroke="#444746" stroke-width="1.9"/></svg>
<div class="dd" style="left:1212px;top:105px"></div>
<svg class="ico" style="left:1236px;top:97px" width="20" height="22" viewBox="0 0 20 22"><circle cx="2.8" cy="4.7" r="1.8" fill="#444746"/><circle cx="2.8" cy="10.2" r="1.8" fill="#444746"/><circle cx="2.8" cy="15.3" r="1.8" fill="#444746"/><path d="M7.2 4.7h11M7.2 10.2h11M7.2 15.3h11" stroke="#444746" stroke-width="1.9"/></svg>
<div class="dd" style="left:1266px;top:105px"></div>
<svg class="ico" style="left:1290px;top:97px" width="20" height="22" viewBox="0 0 20 22"><text x="0.5" y="7" font-size="6.5" font-family="Liberation Sans" font-weight="700" fill="#444746">1</text><text x="0.5" y="12.6" font-size="6.5" font-family="Liberation Sans" font-weight="700" fill="#444746">2</text><text x="0.5" y="18.6" font-size="6.5" font-family="Liberation Sans" font-weight="700" fill="#444746">3</text><path d="M6.3 5.7h11.7M6.3 10.9h11.7M6.3 16.1h11.7" stroke="#444746" stroke-width="1.9"/></svg>
<div class="dd" style="left:1320px;top:105px"></div>
<svg class="ico" style="left:1345px;top:97px" width="18" height="22" viewBox="0 0 18 22"><path d="M0 3h17M7.3 7h9.7M7.3 11h9.7M7.3 15h9.7M0 19h17" stroke="#444746" stroke-width="2"/><path d="M3.7 7.4v7.2L0 11z" fill="#444746"/></svg>
<svg class="ico" style="left:1384.3px;top:97px" width="18" height="22" viewBox="0 0 18 22"><path d="M0 3h17.5M7.9 7h9.6M7.9 11h9.6M7.9 15h9.6M0 19h17.5" stroke="#444746" stroke-width="2"/><path d="M0 7.4v7.2L3.6 11z" fill="#444746"/></svg>
<svg class="ico" style="left:1420px;top:96px" width="24" height="24" viewBox="0 0 24 24"><path d="M3 3.5l18 18" stroke="#444746" stroke-width="2"/><path d="M10.5 5.2h10.5v2.2h-4.3l-0.9 0.7z" fill="#444746"/><path d="M12 8.8L14.6 8.6L9.8 17.8H7.2z" fill="#444746"/></svg>
<svg class="ico" style="left:1630px;top:96px" width="23" height="23" viewBox="0 0 24 24"><path d="M19.5 11.5A8 8 0 1 1 13 4.2" fill="none" stroke="#444746" stroke-width="2.2"/><path d="M9.5 8v8l6.5-4z" fill="#444746"/><path d="M19 1l1.1 2.9L23 5l-2.9 1.1L19 9l-1.1-2.9L15 5l2.9-1.1z" fill="#444746"/></svg>
<div class="a" style="left:1664px;top:89px;width:81px;height:37px;border-radius:18.5px;background:#e9eef7"></div>
<svg class="ico" style="left:1682px;top:97px" width="20" height="20" viewBox="0 0 20 20"><path d="M2 18v-3.5L14.5 2 18 5.5 5.5 18z" fill="none" stroke="#444746" stroke-width="2.2" stroke-linejoin="round"/><path d="M12.5 4l3.5 3.5" stroke="#444746" stroke-width="3"/></svg>
<div class="dd" style="left:1714px;top:104px"></div>
<div class="a" style="left:1756px;top:95px;width:1px;height:25px;background:#c7c7c7"></div>
<svg class="ico" style="left:1773px;top:103px" width="16" height="10" viewBox="0 0 16 10"><path d="M1.5 8.5L8 2l6.5 6.5" fill="none" stroke="#444746" stroke-width="2.2"/></svg>
</body></html>
